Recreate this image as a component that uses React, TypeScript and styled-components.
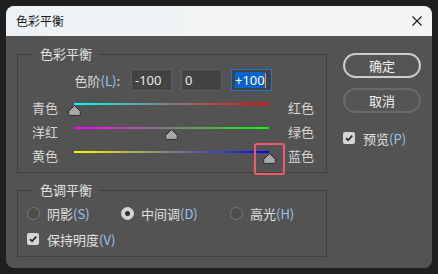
import React from "react";
import styled, { createGlobalStyle } from "styled-components";

const Global = createGlobalStyle`
  html, body { margin: 0; padding: 0; background: #1f1f1f; }
  * { box-sizing: border-box; }
  body { font-family: "Noto Sans", "Noto Sans CJK SC", sans-serif; }
`;

const Page = styled.div`
  width: 438px;
  height: 274px;
  padding: 6px;
  background: #1f1f1f;
`;

const Window = styled.div`
  width: 426px;
  height: 262px;
  border-radius: 8px;
  overflow: hidden;
  display: flex;
  flex-direction: column;
  background: #535353;
`;

const TitleBar = styled.div`
  height: 30px;
  flex: none;
  display: flex;
  align-items: center;
  justify-content: space-between;
  padding: 0 10px 0 10px;
  background: linear-gradient(90deg, #edf2f6 0%, #f1f3f4 50%, #f3f3f2 100%);
`;

const Title = styled.span`
  font-family: "Noto Sans CJK SC", sans-serif;
  font-size: 12px;
  color: #1a1a1a;
  line-height: 16px;
`;

const CloseBtn = styled.div`
  width: 10px;
  height: 10px;
  display: flex;
  margin-right: 0px;
`;

const Body = styled.div`
  flex: 1;
  display: flex;
  gap: 16px;
  padding: 9px 11px 10px 11px;
  font-family: "Noto Sans", "Noto Sans CJK SC", sans-serif;
  color: #dedede;
  font-size: 13px;
`;

const LeftCol = styled.div`
  width: 310px;
  display: flex;
  flex-direction: column;
`;

const Group = styled.fieldset<{ $gap?: number }>`
  margin: ${(p) => p.$gap ?? 0}px 0 0 0;
  padding: 0 0 ${(p) => (p.$gap ? 6 : 0)}px 0;
  border: 1px solid #3f3f3f;
  min-width: 0;
`;

const Legend = styled.legend`
  margin-left: 15px;
  padding: 0 7px;
  line-height: 18px;
  font-family: "Noto Sans CJK SC", sans-serif;
  font-size: 13px;
  color: #e2e2e2;
`;

const LevelsRow = styled.div`
  margin-top: 6px;
  height: 22px;
  display: flex;
  align-items: center;
  justify-content: flex-end;
  padding-right: 54px;
  gap: 9px;
`;

const LevelsLabel = styled.span`
  margin-right: 2px;
  font-family: "Noto Sans CJK SC", sans-serif;
  font-size: 13px;
  color: #dcdcdc;
`;

const Key = styled.span`
  color: #9cc6f0;
`;

const NumBox = styled.div<{ $active?: boolean }>`
  width: 41px;
  height: 22px;
  display: flex;
  align-items: center;
  padding-left: 3px;
  background: #434343;
  border: 1px solid ${(p) => (p.$active ? "#1f74d8" : "#5e5e5e")};
  font-family: "Noto Sans", sans-serif;
  font-size: 13px;
  color: #e8e8e8;
`;

const Selected = styled.span`
  background: #0a62cc;
  color: #ffffff;
  line-height: 16px;
`;

const Caret = styled.span`
  width: 1px;
  height: 15px;
  background: #ff9a2e;
`;

const SliderRows = styled.div`
  margin-top: 9px;
  display: flex;
  flex-direction: column;
`;

const SliderRow = styled.div`
  height: 24px;
  display: flex;
  align-items: flex-start;
  padding-left: 14px;
`;

const SideLabel = styled.span<{ $right?: boolean }>`
  width: ${(p) => (p.$right ? "auto" : "42px")};
  margin-left: ${(p) => (p.$right ? "19px" : "0")};
  line-height: 14px;
  padding-top: 1px;
  font-family: "Noto Sans CJK SC", sans-serif;
  font-size: 13px;
  color: #d6d6d6;
`;

const SliderArea = styled.div`
  position: relative;
  width: 195px;
  height: 16px;
  padding-top: 3px;
`;

const Track = styled.div<{ $from: string; $to: string }>`
  height: 2px;
  background: linear-gradient(90deg, ${(p) => p.$from}, ${(p) => p.$to});
`;

const ThumbWrap = styled.div`
  position: absolute;
  top: 5px;
  width: 13px;
  height: 11px;
  display: flex;
`;

const Highlight = styled.div`
  position: absolute;
  left: -9px;
  top: -10px;
  width: 31px;
  height: 32px;
  border: 2px solid #f25a6c;
  border-radius: 3px;
`;

const RadioRow = styled.div`
  margin-top: 3px;
  height: 22px;
  display: grid;
  grid-template-columns: 94px 109px auto;
  align-items: center;
  padding-left: 9px;
`;

const Option = styled.label`
  display: flex;
  align-items: center;
  gap: 7px;
  font-family: "Noto Sans CJK SC", sans-serif;
  font-size: 13px;
  color: #e0e0e0;
`;

const Radio = styled.span<{ $on?: boolean }>`
  width: 13px;
  height: 13px;
  border-radius: 50%;
  display: flex;
  align-items: center;
  justify-content: center;
  background: ${(p) => (p.$on ? "#d4d4d4" : "#4c4c4c")};
  border: 1px solid ${(p) => (p.$on ? "#d4d4d4" : "#7a7a7a")};
`;

const Dot = styled.span`
  width: 5px;
  height: 5px;
  border-radius: 50%;
  background: #303030;
`;

const CheckRow = styled.div<{ $top: number; $pad: number }>`
  margin-top: ${(p) => p.$top}px;
  height: 22px;
  display: flex;
  align-items: center;
  padding-left: ${(p) => p.$pad}px;
`;

const CheckOption = styled.label`
  display: flex;
  align-items: center;
  gap: 8px;
  font-family: "Noto Sans CJK SC", sans-serif;
  font-size: 13px;
  color: #e0e0e0;
`;

const Box = styled.span`
  width: 12px;
  height: 12px;
  border-radius: 2px;
  background: #d6d6d6;
  display: flex;
`;

const RightCol = styled.div`
  width: 78px;
  padding-top: 8px;
  display: flex;
  flex-direction: column;
`;

const Button = styled.div<{ $primary?: boolean }>`
  height: 25px;
  margin-top: ${(p) => (p.$primary ? 0 : 10)}px;
  border-radius: 13px;
  border: 2px solid ${(p) => (p.$primary ? "#cdcdcd" : "#6a6a6a")};
  display: flex;
  align-items: center;
  justify-content: center;
  font-family: "Noto Sans CJK SC", sans-serif;
  font-size: 13px;
  color: #f2f2f2;
  background: #555555;
`;

const Thumb = () => (
  <svg width="13" height="11" viewBox="0 0 13 11">
    <path
      d="M6.5 0.6 L12.3 6.2 V9.4 Q12.3 10.4 11.3 10.4 H1.7 Q0.7 10.4 0.7 9.4 V6.2 Z"
      fill="#a9a9a9"
      stroke="#2c2c2c"
      strokeWidth="1"
      strokeLinejoin="round"
    />
  </svg>
);

const Check = () => (
  <svg width="12" height="12" viewBox="0 0 12 12">
    <path d="M3 6.2 L5.1 8.3 L9.2 3.7" fill="none" stroke="#2a2a2a" strokeWidth="1.8" />
  </svg>
);

type SliderDef = { left: string; right: string; from: string; to: string; value: number; mark?: boolean };

const sliders: SliderDef[] = [
  { left: "青色", right: "红色", from: "#00ffff", to: "#ff0000", value: -100 },
  { left: "洋红", right: "绿色", from: "#ff00ff", to: "#00ff00", value: 0 },
  { left: "黄色", right: "蓝色", from: "#ffff00", to: "#0000ff", value: 100, mark: true },
];

export default function App() {
  return (
    <>
      <Global />
      <Page>
        <Window>
          <TitleBar>
            <Title>色彩平衡</Title>
            <CloseBtn>
              <svg width="10" height="10" viewBox="0 0 10 10">
                <path d="M0.5 0.5 L9.5 9.5 M9.5 0.5 L0.5 9.5" stroke="#1b1b1b" strokeWidth="1.1" />
              </svg>
            </CloseBtn>
          </TitleBar>
          <Body>
            <LeftCol>
              <Group>
                <Legend>色彩平衡</Legend>
                <LevelsRow>
                  <LevelsLabel>
                    色阶<Key>(L)</Key>:
                  </LevelsLabel>
                  <NumBox>-100</NumBox>
                  <NumBox>0</NumBox>
                  <NumBox $active>
                    <Selected>+100</Selected>
                    <Caret />
                  </NumBox>
                </LevelsRow>
                <SliderRows>
                  {sliders.map((s) => {
                    const pct = (s.value + 100) / 2;
                    return (
                      <SliderRow key={s.left}>
                        <SideLabel>{s.left}</SideLabel>
                        <SliderArea>
                          <Track $from={s.from} $to={s.to} />
                          <ThumbWrap style={{ left: `calc(${pct}% - 6.5px)` }}>
                            <Thumb />
                            {s.mark && <Highlight />}
                          </ThumbWrap>
                        </SliderArea>
                        <SideLabel $right>{s.right}</SideLabel>
                      </SliderRow>
                    );
                  })}
                </SliderRows>
              </Group>
              <Group $gap={8}>
                <Legend>色调平衡</Legend>
                <RadioRow>
                  <Option>
                    <Radio />
                    <span>
                      阴影<Key>(S)</Key>
                    </span>
                  </Option>
                  <Option>
                    <Radio $on>
                      <Dot />
                    </Radio>
                    <span>
                      中间调<Key>(D)</Key>
                    </span>
                  </Option>
                  <Option>
                    <Radio />
                    <span>
                      高光<Key>(H)</Key>
                    </span>
                  </Option>
                </RadioRow>
                <CheckRow $top={4} $pad={9}>
                  <CheckOption>
                    <Box>
                      <Check />
                    </Box>
                    <span>
                      保持明度<Key>(V)</Key>
                    </span>
                  </CheckOption>
                </CheckRow>
              </Group>
            </LeftCol>
            <RightCol>
              <Button $primary>确定</Button>
              <Button>取消</Button>
              <CheckRow $top={14} $pad={0}>
                <CheckOption>
                  <Box>
                    <Check />
                  </Box>
                  <span>
                    预览<Key>(P)</Key>
                  </span>
                </CheckOption>
              </CheckRow>
            </RightCol>
          </Body>
        </Window>
      </Page>
    </>
  );
}
